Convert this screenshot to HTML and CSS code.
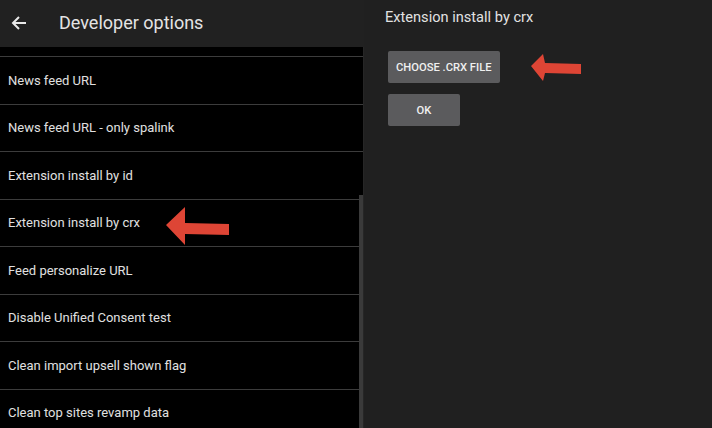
FILE: index.html
```html
<!DOCTYPE html>
<html>
<head>
<meta charset="utf-8">
<link rel="stylesheet" href="styles.css">
</head>
<body>
<div class="screen">
  <div class="left">
    <div class="appbar">
      <svg class="back" width="18" height="18" viewBox="0 0 18 18"><path d="M16 9H3M9 3L3 9l6 6" fill="none" stroke="#e8e8e8" stroke-width="2"/></svg>
      <span class="title">Developer options</span>
    </div>
    <div class="list">
      <div class="row">News feed URL</div>
      <div class="row">News feed URL - only spalink</div>
      <div class="row">Extension install by id</div>
      <div class="row">Extension install by crx</div>
      <div class="row">Feed personalize URL</div>
      <div class="row">Disable Unified Consent test</div>
      <div class="row">Clean import upsell shown flag</div>
      <div class="row">Clean top sites revamp data</div>
      <div class="thumb"></div>
      <svg class="arrow arrow-list" width="66" height="40" viewBox="0 0 66 40"><path d="M0 18L19 0L19 16L63 17L63 28L19 27L19 38Z" fill="#de4535"/></svg>
    </div>
  </div>
  <div class="right">
    <div class="panel-title">Extension install by crx</div>
    <div class="buttons">
      <button class="btn">CHOOSE .CRX FILE</button>
      <button class="btn btn-ok">OK</button>
    </div>
    <svg class="arrow arrow-panel" width="52" height="30" viewBox="0 0 52 30"><path d="M0 13L12 1L14 10L50 11L50 21L14 20L12 28Z" fill="#de4535"/></svg>
  </div>
</div>
</body>
</html>
```
FILE: styles.css
```css
html, body {
  margin: 0;
  padding: 0;
  background: #202020;
}
body {
  font-family: Roboto, "Noto Sans", sans-serif;
  color: #e2e2e2;
}
.screen {
  display: flex;
  width: 712px;
  height: 428px;
  overflow: hidden;
}
.left {
  width: 364px;
  display: flex;
  flex-direction: column;
}
.appbar {
  height: 47px;
  background: #212121;
  display: flex;
  align-items: center;
  box-sizing: border-box;
  padding-left: 10px;
  padding-bottom: 2px;
  flex-shrink: 0;
}
.back {
  display: block;
}
.title {
  margin-left: 31px;
  font-size: 18px;
  color: #e4e4e4;
}
.list {
  position: relative;
  flex: 1;
  background: #000;
  padding-top: 9px;
  border-right: 1px solid #262626;
}
.row {
  height: 46.5px;
  border-top: 1px solid #3c3c3c;
  display: flex;
  align-items: center;
  padding-left: 8px;
  font-size: 13px;
  color: #e0e0e0;
}
.thumb {
  position: absolute;
  right: 0;
  top: 148px;
  width: 4px;
  bottom: 0;
  background: #3a3a3a;
}
.arrow {
  position: absolute;
}
.arrow-list {
  left: 166px;
  top: 160px;
}
.right {
  position: relative;
  flex: 1;
  background: #202020;
  padding-left: 21px;
}
.panel-title {
  font-size: 14.6px;
  margin-top: 8px;
  color: #e2e2e2;
}
.buttons {
  display: flex;
  flex-direction: column;
  align-items: flex-start;
  gap: 11px;
  margin-top: 25px;
  margin-left: 3px;
}
.btn {
  font-family: Roboto, sans-serif;
  font-weight: 500;
  font-size: 11.2px;
  color: #f0f0f0;
  background: #5b5b5d;
  border: none;
  border-radius: 2px;
  height: 32px;
  padding: 0 8px;
}
.btn-ok {
  width: 72px;
}
.arrow-panel {
  left: 167px;
  top: 53px;
}
```
